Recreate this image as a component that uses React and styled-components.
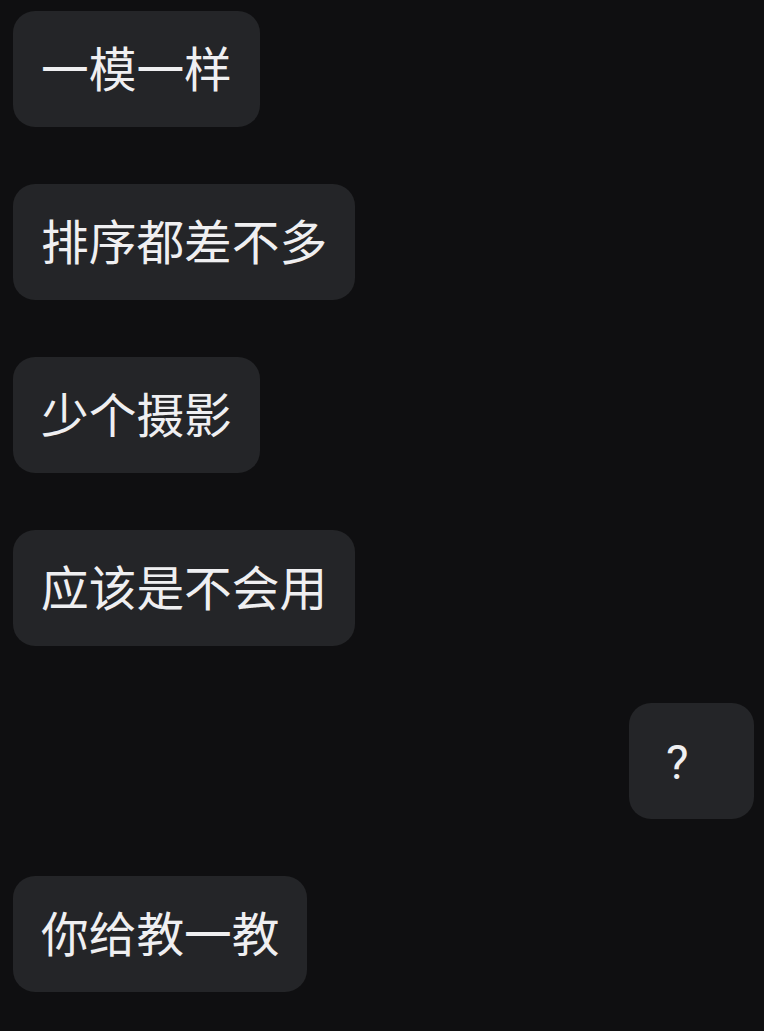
import React from "react";
import styled, { createGlobalStyle } from "styled-components";

const GlobalStyle = createGlobalStyle`
  html, body {
    margin: 0;
    padding: 0;
    background-color: #0f0f11;
  }
`;

const Chat = styled.div`
  display: flex;
  flex-direction: column;
  gap: 57px;
  padding: 11px 10px 20px 13px;
  min-height: 1031px;
  box-sizing: border-box;
  background-color: #0f0f11;
  font-family: Roboto, "Noto Sans CJK SC", "Noto Sans", sans-serif;
`;

const Bubble = styled.div`
  align-self: ${(p) => (p.$mine ? "flex-end" : "flex-start")};
  display: flex;
  align-items: center;
  box-sizing: border-box;
  height: 116px;
  min-width: ${(p) => (p.$mine ? "125px" : "0")};
  padding: 5px 28px 0 ${(p) => (p.$mine ? "37px" : "28px")};
  background-color: #242528;
  color: #efeff1;
  border-radius: 22px;
  font-size: 47.7px;
  font-weight: 400;
  line-height: 1;
  white-space: nowrap;
`;

const messages = [
  { text: "一模一样" },
  { text: "排序都差不多" },
  { text: "少个摄影" },
  { text: "应该是不会用" },
  { text: "?", mine: true },
  { text: "你给教一教" },
];

function App() {
  return (
    <>
      <GlobalStyle />
      <Chat>
        {messages.map((m, i) => (
          <Bubble key={i} $mine={m.mine}>
            {m.text}
          </Bubble>
        ))}
      </Chat>
    </>
  );
}

export default App;
